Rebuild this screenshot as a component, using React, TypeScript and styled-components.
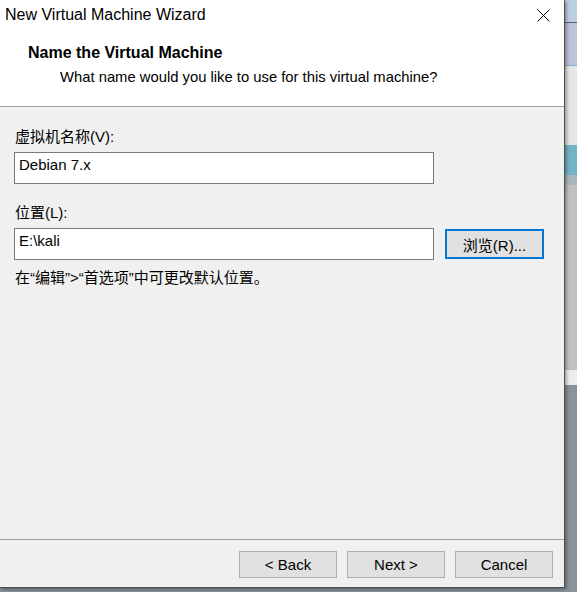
import styled, { createGlobalStyle } from 'styled-components';

const GlobalStyle = createGlobalStyle`
  html, body {
    margin: 0;
    padding: 0;
    height: 100%;
  }
  body {
    overflow: hidden;
    background: linear-gradient(
      to bottom,
      #bdd0e2 0 22px,
      #5c6670 22px 23px,
      #bcc3da 23px 65px,
      #7fb0d0 65px 66px,
      #e4e5e7 66px 145px,
      #74b3c5 145px 175px,
      #aab8bb 175px 185px,
      #c0c1c2 185px 370px,
      #ececec 370px 385px,
      #8a939a 385px
    );
  }
`;

const uiFont = `"Liberation Sans", "Noto Sans CJK SC", sans-serif`;

const Window = styled.div`
  width: 564px;
  height: 587px;
  display: flex;
  flex-direction: column;
  background: #f0f0f0;
  border-right: 1px solid #4f4f4f;
  border-bottom: 1px solid #4f4f4f;
  box-shadow: 1px 1px 4px rgba(0, 0, 0, 0.45);
  font-family: ${uiFont};
  font-size: 15px;
  color: #000;
`;

const TitleBar = styled.div`
  height: 31px;
  display: flex;
  align-items: center;
  justify-content: space-between;
  padding-left: 5px;
  background: #fff;
`;

const TitleText = styled.span`
  font-size: 16px;
  padding-bottom: 1px;
`;

const CloseButton = styled.div`
  width: 46px;
  height: 31px;
  display: flex;
  align-items: center;
  justify-content: center;
  margin-right: -2px;
`;

const Header = styled.div`
  height: 76px;
  background: #fff;
  border-bottom: 1px solid #a0a0a0;
  padding: 13px 0 0 28px;
  box-sizing: border-box;
`;

const HeaderTitle = styled.div`
  font-weight: bold;
  font-size: 16px;
  line-height: 18px;
`;

const HeaderSub = styled.div`
  font-size: 14.8px;
  line-height: 18px;
  margin: 6px 0 0 32px;
`;

const Body = styled.div`
  flex: 1;
  padding: 21px 0 0 14px;
  display: flex;
  flex-direction: column;
`;

const Label = styled.div<{ $top?: number }>`
  line-height: 18px;
  margin: ${(p) => p.$top ?? 0}px 0 6px 1px;
`;

const Row = styled.div`
  display: flex;
  align-items: center;
  gap: 11px;
`;

const Field = styled.input`
  width: 420px;
  height: 32px;
  box-sizing: border-box;
  border: 1px solid #7a7a7a;
  background: #fff;
  padding: 0 4px 7px;
  margin: 0;
  font-family: ${uiFont};
  font-size: 15px;
  color: #000;
  outline: none;
`;

const Button = styled.button<{ $focused?: boolean }>`
  box-sizing: border-box;
  width: ${(p) => (p.$focused ? 99 : 98)}px;
  height: ${(p) => (p.$focused ? 30 : 27)}px;
  margin: 0;
  padding: 0;
  background: #e1e1e1;
  border: ${(p) => (p.$focused ? '2px solid #0078d7' : '1px solid #adadad')};
  font-family: ${uiFont};
  font-size: 15px;
  color: #000;
`;

const Note = styled.div`
  line-height: 18px;
  margin: 9px 0 0 1px;
`;

const Footer = styled.div`
  border-top: 1px solid #a0a0a0;
  padding: 11px 11px 9px 0;
  display: flex;
  justify-content: flex-end;
  gap: 10px;
`;

export default function App() {
  return (
    <>
      <GlobalStyle />
      <Window>
        <TitleBar>
          <TitleText>New Virtual Machine Wizard</TitleText>
          <CloseButton>
            <svg width="13" height="13" viewBox="0 0 13 13">
              <path d="M0.5 0.5 L12.5 12.5 M12.5 0.5 L0.5 12.5" stroke="#000" strokeWidth="1" />
            </svg>
          </CloseButton>
        </TitleBar>
        <Header>
          <HeaderTitle>Name the Virtual Machine</HeaderTitle>
          <HeaderSub>What name would you like to use for this virtual machine?</HeaderSub>
        </Header>
        <Body>
          <Label>虚拟机名称(V):</Label>
          <Field defaultValue="Debian 7.x" readOnly />
          <Label $top={20}>位置(L):</Label>
          <Row>
            <Field defaultValue="E:\kali" readOnly />
            <Button $focused>浏览(R)...</Button>
          </Row>
          <Note>在“编辑”&gt;“首选项”中可更改默认位置。</Note>
        </Body>
        <Footer>
          <Button>&lt; Back</Button>
          <Button>Next &gt;</Button>
          <Button>Cancel</Button>
        </Footer>
      </Window>
    </>
  );
}
